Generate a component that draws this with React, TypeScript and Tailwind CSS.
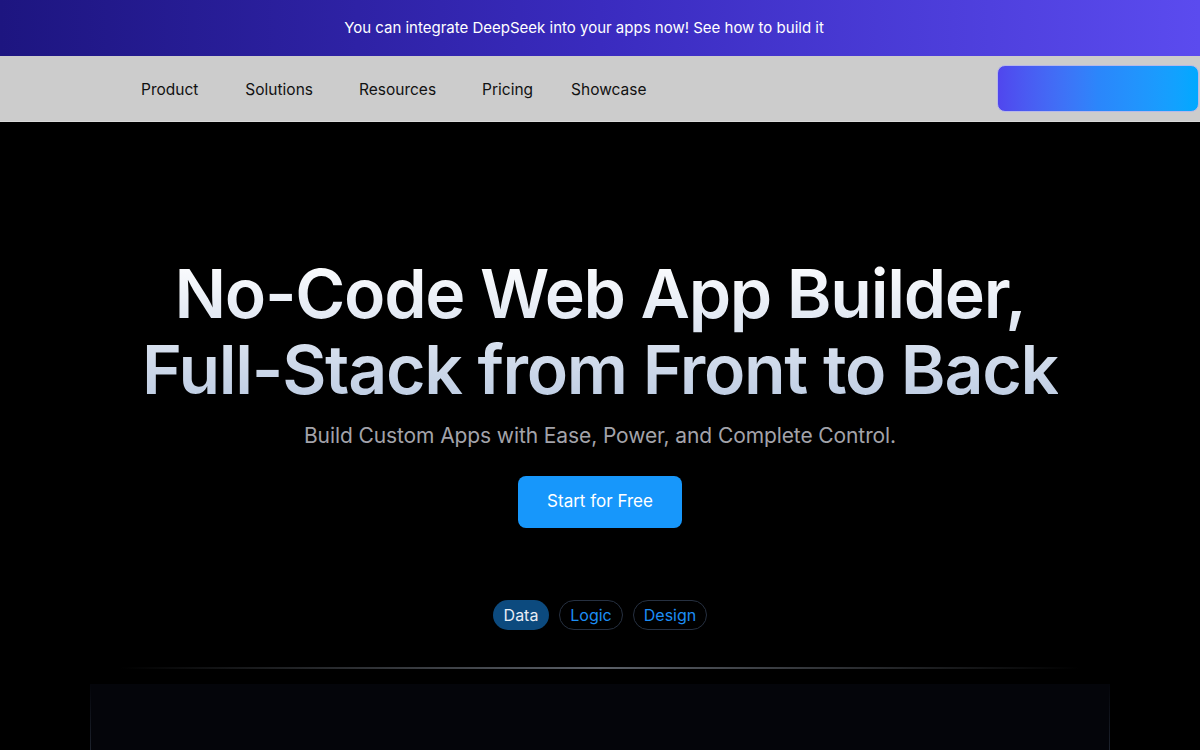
export default function App() {
  const font = { fontFamily: '"Inter", "Noto Sans", sans-serif' };
  return (
    <div className="w-[1200px] h-[750px] overflow-hidden bg-black" style={font}>
      <div className="h-[56px] flex items-center justify-center bg-gradient-to-r from-[#1d1580] via-[#3a2bbf] to-[#5b4bef] text-white text-[15px]">
        <span className="ml-[-32px]">You can integrate DeepSeek into your apps now! See how to build it</span>
      </div>
      <div className="h-[66px] bg-[#cccccc] border-b border-[#d9d9d9] flex items-center">
        <nav className="flex items-center pl-[141px] pt-[3px] text-[15.5px] text-[#111111]">
          <span className="mr-[47px]">Product</span>
          <span className="mr-[46px]">Solutions</span>
          <span className="mr-[46px]">Resources</span>
          <span className="mr-[38px]">Pricing</span>
          <span>Showcase</span>
        </nav>
        <div className="ml-auto mr-[1px] w-[202px] h-[47px] rounded-[8px] border border-[#b8b8e8] bg-gradient-to-r from-[#5046ee] via-[#2b86fb] to-[#00a9ff]" />
      </div>
      <div className="flex flex-col items-center">
        <h1 className="mt-[133px] text-center text-[68px] leading-[76px] font-semibold tracking-[-1.3px] bg-gradient-to-b from-[#ffffff] to-[#bccbe2] bg-clip-text text-transparent">
          No-Code Web App Builder,
          <br />
          Full-Stack from Front to Back
        </h1>
        <p className="mt-[14px] text-[21px] leading-[30px] text-[#a3a3aa] tracking-[-0.1px]">
          Build Custom Apps with Ease, Power, and Complete Control.
        </p>
        <button className="mt-[25px] w-[164px] h-[52px] rounded-[8px] bg-[#1797fb] text-white text-[17px]">
          Start for Free
        </button>
        <div className="mt-[72px] flex gap-[10px] text-[16px]">
          <span className="w-[56px] h-[30px] rounded-full bg-[#0c4a7e] text-[#e8eef6] flex items-center justify-center">Data</span>
          <span className="w-[64px] h-[30px] rounded-full border border-[#263040] text-[#1c8ef5] flex items-center justify-center">Logic</span>
          <span className="w-[74px] h-[30px] rounded-full border border-[#263040] text-[#1c8ef5] flex items-center justify-center">Design</span>
        </div>
        <div className="mt-[37px] w-[960px] h-[2px] bg-gradient-to-r from-transparent via-[#5b6068] to-transparent" />
        <div className="mt-[15px] w-[1020px] h-[100px] bg-[#04050a] relative">
          <div className="absolute left-0 top-0 w-px h-full bg-gradient-to-b from-transparent to-[#2a3240]" />
          <div className="absolute right-0 top-0 w-px h-full bg-gradient-to-b from-transparent to-[#2a3240]" />
        </div>
      </div>
    </div>
  );
}
